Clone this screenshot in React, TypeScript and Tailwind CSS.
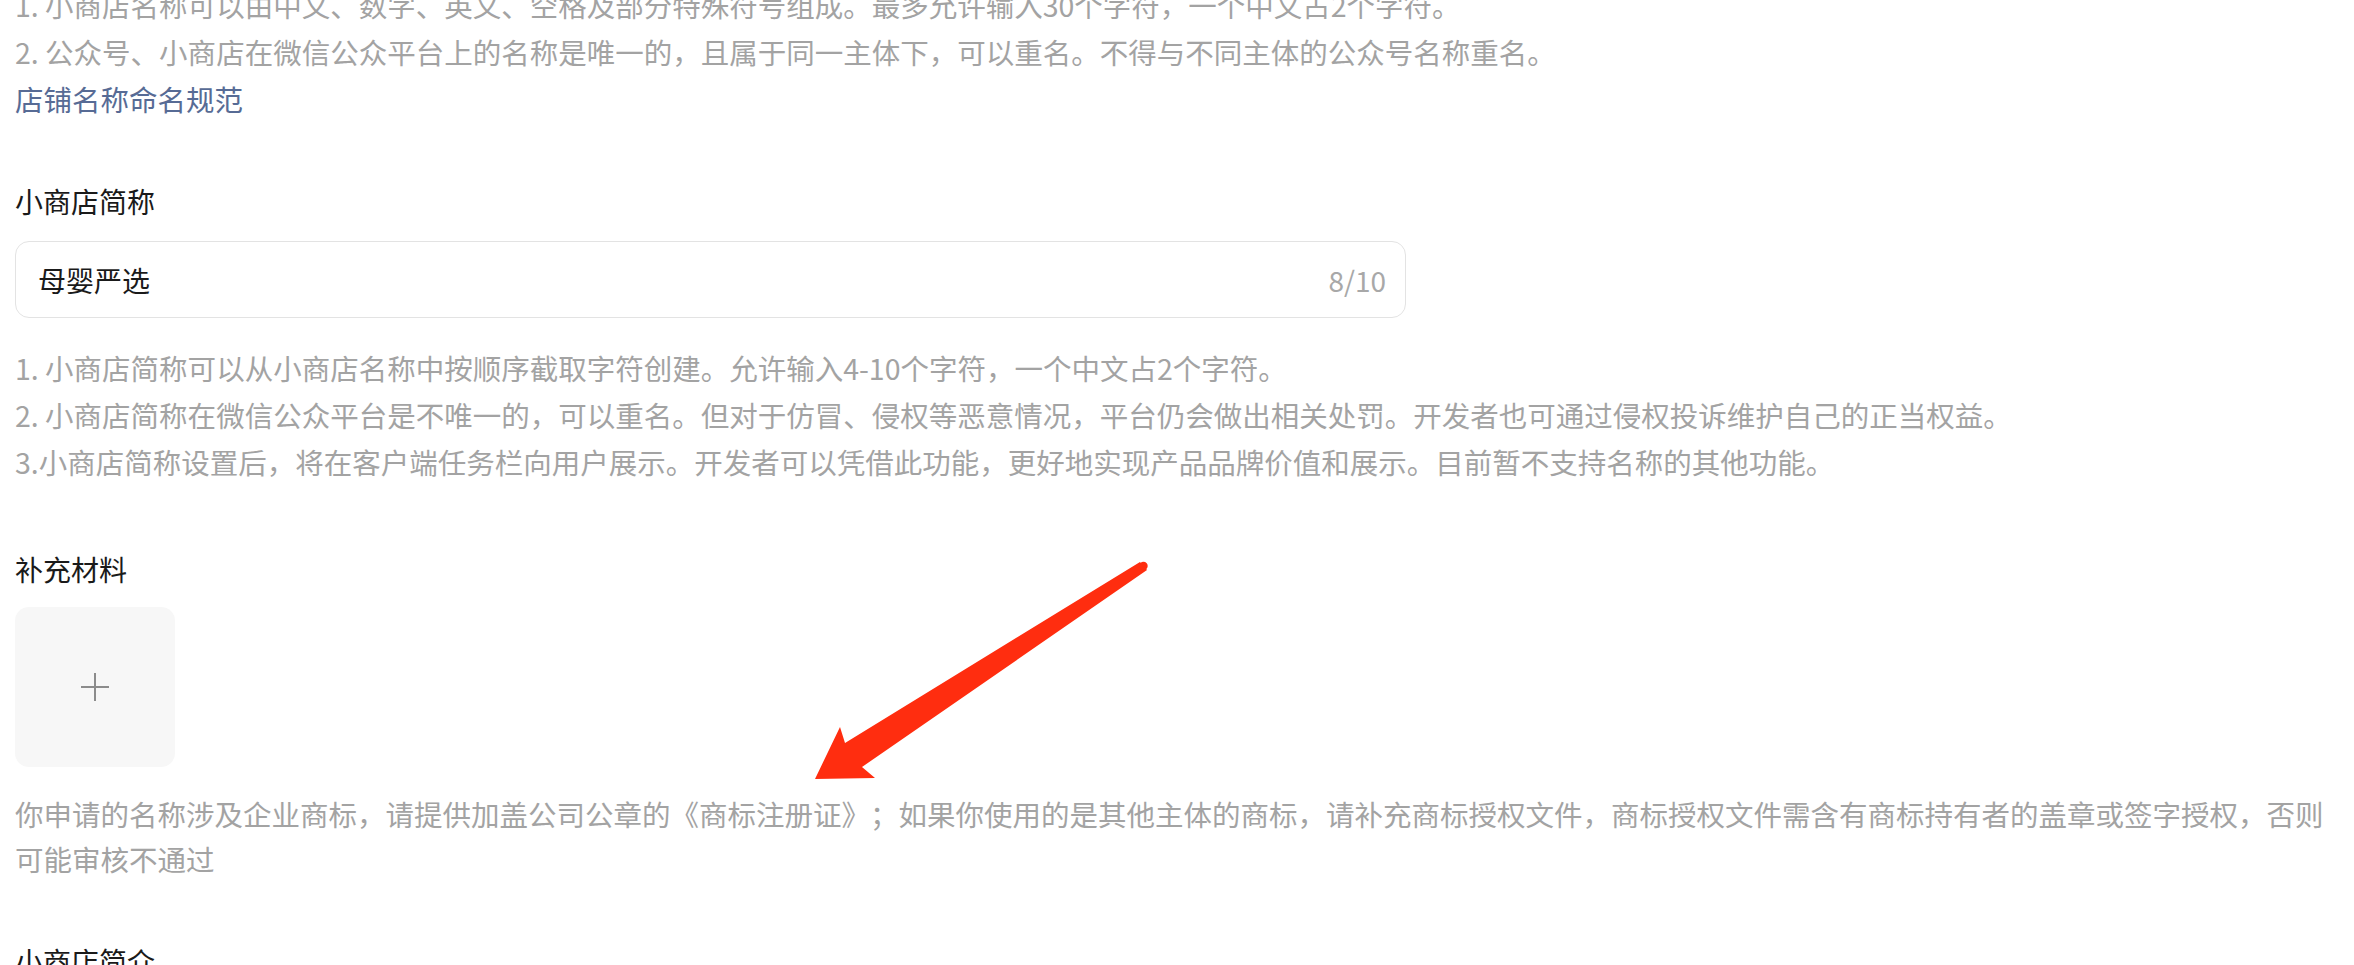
import React from "react";

const font = { fontFamily: '"Noto Sans CJK SC", "Noto Sans", sans-serif' };

export default function App() {
  return (
    <div
      className="relative h-[965px] w-full overflow-hidden bg-white [text-spacing-trim:space-all]"
      style={font}
    >
      <div className="pl-[15px] pr-[15px]">
        {/* top help text (partially cut) */}
        <div className="-mt-[19px] text-[28.5px] leading-[47px] text-[#a3a3a3]">
          <p>1. 小商店名称可以由中文、数字、英文、空格及部分特殊符号组成。最多允许输入30个字符，一个中文占2个字符。</p>
          <p>2. 公众号、小商店在微信公众平台上的名称是唯一的，且属于同一主体下，可以重名。不得与不同主体的公众号名称重名。</p>
          <p className="text-[#576b95]">店铺名称命名规范</p>
        </div>

        {/* 小商店简称 */}
        <div className="mt-[59px] text-[28px] leading-[40px] text-[#1a1a1a]">小商店简称</div>
        <div className="mt-[20px] flex h-[77px] w-[1391px] items-center justify-between rounded-[14px] border border-[#e3e3e3] pl-[22px] pr-[19px]">
          <span className="text-[28px] text-[#1a1a1a]">母婴严选</span>
          <span className="text-[28px] text-[#a8a8a8]">8/10</span>
        </div>
        <div className="mt-[26px] text-[28.5px] leading-[47px] text-[#a3a3a3]">
          <p>1. 小商店简称可以从小商店名称中按顺序截取字符创建。允许输入4-10个字符，一个中文占2个字符。</p>
          <p>2. 小商店简称在微信公众平台是不唯一的，可以重名。但对于仿冒、侵权等恶意情况，平台仍会做出相关处罚。开发者也可通过侵权投诉维护自己的正当权益。</p>
          <p>3.小商店简称设置后，将在客户端任务栏向用户展示。开发者可以凭借此功能，更好地实现产品品牌价值和展示。目前暂不支持名称的其他功能。</p>
        </div>

        {/* 补充材料 */}
        <div className="mt-[64px] text-[28px] leading-[40px] text-[#1a1a1a]">补充材料</div>
        <div className="mt-[18px] flex h-[160px] w-[160px] items-center justify-center rounded-[14px] bg-[#f7f7f7]">
          <svg width="30" height="30" viewBox="0 0 30 30">
            <path d="M15 1 V29 M1 15 H29" stroke="#8c8c8c" strokeWidth="2" />
          </svg>
        </div>
        <p className="mt-[24px] max-w-[2318px] text-[28.5px] leading-[45px] text-[#a3a3a3]">
          你申请的名称涉及企业商标，请提供加盖公司公章的《商标注册证》；如果你使用的是其他主体的商标，请补充商标授权文件，商标授权文件需含有商标持有者的盖章或签字授权，否则可能审核不通过
        </p>

        {/* 小商店简介 */}
        <div className="mt-[60px] text-[28px] leading-[40px] text-[#1a1a1a]">小商店简介</div>
      </div>

      {/* red annotation arrow */}
      <svg
        className="pointer-events-none absolute left-0 top-0"
        width="2354"
        height="965"
        viewBox="0 0 2354 965"
      >
        <path
          d="M1140 562 L845 743 L840 727 L815 779 L875 778 L862 767 L1147 570 Z"
          fill="#ff2d0f"
        />
        <circle cx="1143.5" cy="566" r="4.2" fill="#ff2d0f" />
      </svg>
    </div>
  );
}
